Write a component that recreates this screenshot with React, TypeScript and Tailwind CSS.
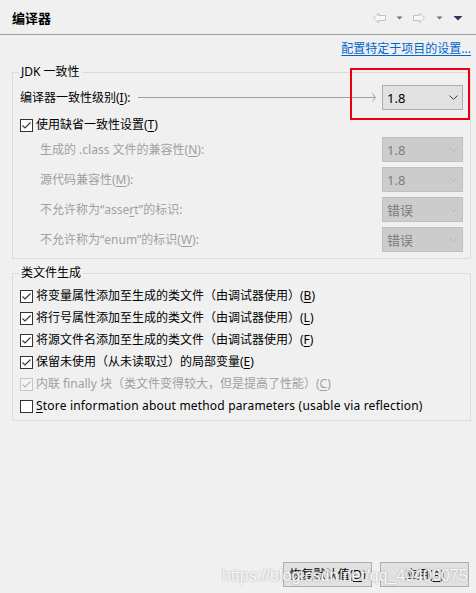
import React from "react";

function Check({ checked, disabled }: { checked?: boolean; disabled?: boolean }) {
  return (
    <span
      className={`w-[13px] h-[13px] border flex items-center justify-center shrink-0 ${
        disabled ? "border-[#c6c6c6] bg-[#f4f4f4]" : "border-[#333333] bg-white"
      }`}
    >
      {checked && (
        <svg width="11" height="11" viewBox="0 0 11 11">
          <path
            d="M1.5 5.5 L4 8 L9.5 2.5"
            fill="none"
            stroke={disabled ? "#b4b4b4" : "#333333"}
            strokeWidth="1.1"
          />
        </svg>
      )}
    </span>
  );
}

function Combo({ value, disabled }: { value: string; disabled?: boolean }) {
  return (
    <div
      className={`w-[81px] h-[25px] border flex items-center justify-between pl-[4px] pr-[4px] shrink-0 ${
        disabled ? "bg-[#cccccc] border-[#bfbfbf] text-[#7d7d7d]" : "bg-[#e1e1e1] border-[#adadad] text-black"
      }`}
    >
      <span className="text-[13px] leading-[16px]">{value}</span>
      <svg width="9" height="5" viewBox="0 0 9 5">
        <path
          d="M0.5 0.5 L4.5 4.5 L8.5 0.5"
          fill="none"
          stroke={disabled ? "#b9b9b9" : "#404040"}
          strokeWidth="1"
        />
      </svg>
    </div>
  );
}

function U({ children }: { children: React.ReactNode }) {
  return <span className="underline underline-offset-2">{children}</span>;
}

export default function App() {
  return (
    <div className="relative w-[476px] h-[593px] bg-[#f0f0f0] flex flex-col overflow-hidden text-[12px] leading-[16px] text-black font-['Noto_Sans','Noto_Sans_CJK_SC',sans-serif]">
      {/* header */}
      <div className="h-[35px] shrink-0 flex items-center justify-between pl-[12px] pr-[13px] border-b border-[#a0a0a0]">
        <span className="text-[13px] font-bold mt-[2px]">编译器</span>
        <svg width="91" height="12" viewBox="0 0 91 12" className="mt-[2px]">
          <polygon
            points="1.5,6 6.5,1 6.5,3.5 13.5,3.5 13.5,8.5 6.5,8.5 6.5,11"
            fill="#f7f7f7"
            stroke="#c3c3c3"
            strokeWidth="1"
          />
          <polygon points="24.5,4.5 30.5,4.5 27.5,7.5" fill="#6f6f6f" />
          <polygon
            points="41.5,3.5 47.5,3.5 47.5,1 52.5,6 47.5,11 47.5,8.5 41.5,8.5"
            fill="#f7f7f7"
            stroke="#c3c3c3"
            strokeWidth="1"
          />
          <polygon points="64.5,4.5 70.5,4.5 67.5,7.5" fill="#6f6f6f" />
          <polygon points="81.5,4 90.5,4 86,8.5" fill="#3f2a5e" />
        </svg>
      </div>

      {/* link */}
      <div className="mt-[6px] h-[16px] flex justify-end pr-[5px]">
        <span className="text-[#0066cc] underline underline-offset-2">配置特定于项目的设置...</span>
      </div>

      {/* JDK group */}
      <fieldset className="mt-[7px] ml-[12px] w-[459px] border border-[#dcdcdc] pl-[7px] pr-[7px] pb-[6px]">
        <legend className="px-[2px] -ml-[1px]">JDK 一致性</legend>
        <div className="mt-[5px] h-[25px] flex items-center">
          <span>
            编译器一致性级别(<U>I</U>):
          </span>
          <div className="flex-1 flex items-center ml-[7px] mr-[6px]">
            <div className="flex-1 h-px bg-[#a0a0a0]" />
            <svg width="4" height="9" viewBox="0 0 4 9" className="-ml-[3px]">
              <path d="M0.5 0.5 L3.5 4.5 L0.5 8.5" fill="none" stroke="#a0a0a0" strokeWidth="1" />
            </svg>
          </div>
          <Combo value="1.8" />
        </div>
        <div className="mt-[5px] h-[20px] flex items-center gap-[3px]">
          <Check checked />
          <span>
            使用缺省一致性设置(<U>T</U>)
          </span>
        </div>
        <div className="mt-[2px] flex flex-col gap-[5px] text-[#a0a0a0]">
          <div className="h-[25px] flex items-center justify-between pl-[20px]">
            <span>
              生成的 .class 文件的兼容性(<U>N</U>):
            </span>
            <Combo value="1.8" disabled />
          </div>
          <div className="h-[25px] flex items-center justify-between pl-[20px]">
            <span>
              源代码兼容性(<U>M</U>):
            </span>
            <Combo value="1.8" disabled />
          </div>
          <div className="h-[25px] flex items-center justify-between pl-[20px]">
            <span>
              不允许称为“asse<U>r</U>t”的标识:
            </span>
            <Combo value="错误" disabled />
          </div>
          <div className="h-[25px] flex items-center justify-between pl-[20px]">
            <span>
              不允许称为“enum”的标识(<U>W</U>):
            </span>
            <Combo value="错误" disabled />
          </div>
        </div>
      </fieldset>

      {/* class file group */}
      <fieldset className="mt-[6px] ml-[12px] w-[459px] border border-[#dcdcdc] pl-[7px] pr-[7px] pb-[3px]">
        <legend className="px-[2px] -ml-[1px]">类文件生成</legend>
        <div className="mt-[4px] flex flex-col">
          <div className="h-[22px] flex items-center gap-[3px]">
            <Check checked />
            <span>
              将变量属性添加至生成的类文件（由调试器使用）(<U>B</U>)
            </span>
          </div>
          <div className="h-[22px] flex items-center gap-[3px]">
            <Check checked />
            <span>
              将行号属性添加至生成的类文件（由调试器使用）(<U>L</U>)
            </span>
          </div>
          <div className="h-[22px] flex items-center gap-[3px]">
            <Check checked />
            <span>
              将源文件名添加至生成的类文件（由调试器使用）(<U>F</U>)
            </span>
          </div>
          <div className="h-[22px] flex items-center gap-[3px]">
            <Check checked />
            <span>
              保留未使用（从未读取过）的局部变量(<U>E</U>)
            </span>
          </div>
          <div className="h-[22px] flex items-center gap-[3px] text-[#a0a0a0]">
            <Check checked disabled />
            <span>
              内联 finally 块（类文件变得较大，但是提高了性能）(<U>C</U>)
            </span>
          </div>
          <div className="h-[22px] flex items-center gap-[3px]">
            <Check />
            <span className="tracking-[0.18px]">
              <U>S</U>tore information about method parameters (usable via reflection)
            </span>
          </div>
        </div>
      </fieldset>

      {/* buttons */}
      <div className="mt-auto flex justify-end gap-[8px] pr-[7px] pb-[6px]">
        <button className="w-[89px] h-[25px] border border-[#adadad] bg-[#e1e1e1] flex items-center justify-center">
          恢复默认值(<U>D</U>)
        </button>
        <button className="w-[89px] h-[25px] border border-[#adadad] bg-[#e1e1e1] flex items-center justify-center">
          应用(<U>A</U>)
        </button>
      </div>

      {/* watermark */}
      <div className="absolute left-[222px] top-[566px] text-[16px] leading-[20px] font-['Liberation_Sans',sans-serif] text-white/90 [text-shadow:0_0_2px_#9a9a9a] pointer-events-none whitespace-nowrap">
        https://blog.csdn.net/qq_40406075
      </div>

      {/* red annotation */}
      <div className="absolute left-[350px] top-[68px] w-[120px] h-[52px] border-2 border-[#e60012] pointer-events-none" />
    </div>
  );
}
